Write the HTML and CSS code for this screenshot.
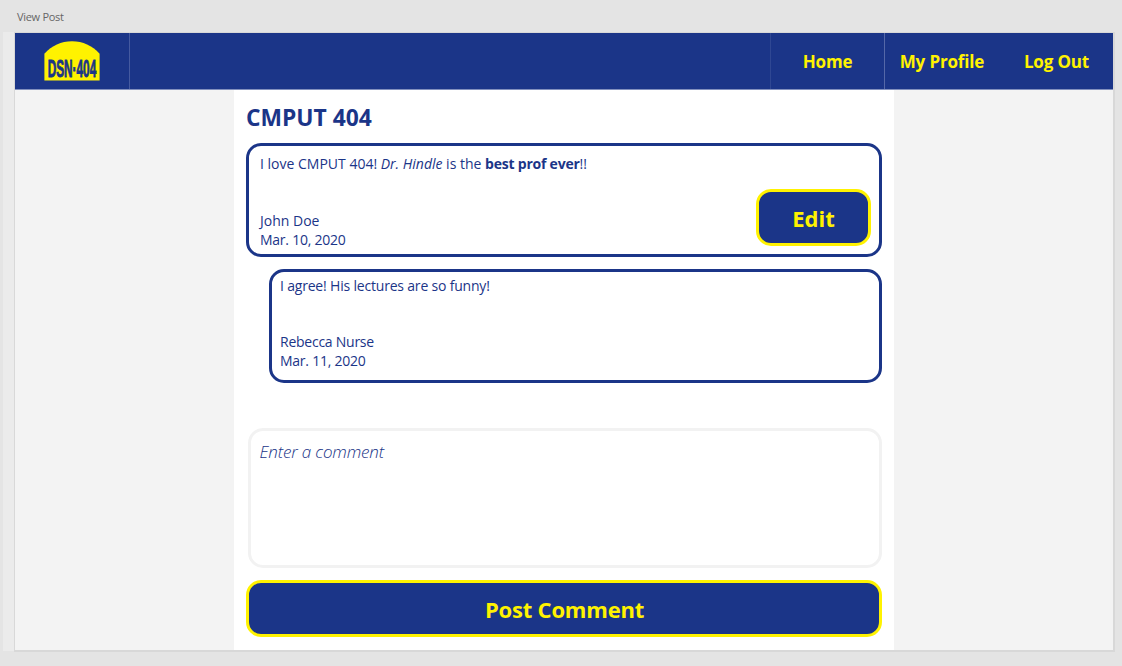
FILE: index.html
```html
<!DOCTYPE html>
<html lang="en">
<head>
<meta charset="utf-8">
<title>View Post</title>
<link rel="stylesheet" href="styles.css">
</head>
<body>
<div class="caption">View Post</div>
<div class="stage">
  <div class="artboard">
    <nav class="navbar">
      <a class="brand">
        <svg width="56" height="40" viewBox="0 0 56 40">
          <path d="M0.4 39.6V12.8C8 4.500 17 0.300 28 0.300S48 4.500 55.600 12.800V39.600Z" fill="#fff200"/>
          <text class="logo-text" x="3.700" y="35.700" textLength="48.500" lengthAdjust="spacingAndGlyphs">DSN·404</text>
        </svg>
      </a>
      <a class="link home"><span>Home</span></a>
      <a class="link profile"><span>My Profile</span></a>
      <a class="link logout"><span>Log Out</span></a>
    </nav>
    <main class="column">
      <h1 class="title"><span>CMPUT 404</span></h1>
      <article class="card post">
        <div class="card-text">
          <p class="message"><span>I love CMPUT 404! </span><em>Dr. Hindle</em><span> is the </span><strong>best prof ever</strong><span>!!</span></p>
          <p>John Doe</p>
          <p class="date">Mar. 10, 2020</p>
        </div>
        <button class="button edit"><span>Edit</span></button>
      </article>
      <article class="card reply">
        <div class="card-text">
          <p class="message">I agree! His lectures are so funny!</p>
          <p class="author">Rebecca Nurse</p>
          <p class="date">Mar. 11, 2020</p>
        </div>
      </article>
      <div class="comment-box"><span>Enter a comment</span></div>
      <button class="button submit"><span>Post Comment</span></button>
    </main>
  </div>
</div>
</body>
</html>
```
FILE: styles.css
```css
* { box-sizing: border-box; }
body {
  margin: 0;
  width: 1122px;
  height: 666px;
  overflow: hidden;
  background: #e4e4e4;
  color: #1b3588;
  font-family: "Open Sans", "Noto Sans", sans-serif;
}
p, h1 { margin: 0; }
.caption {
  height: 32px;
  padding: 9px 0 0 17px;
  font-size: 11px;
  line-height: 16px;
  letter-spacing: -0.3px;
  color: #666;
}
.stage {
  width: 1112px;
  height: 620px;
  margin-left: 3px;
  padding-left: 11px;
  background: linear-gradient(#ebebeb, #ebebeb) 0 0 / 11px 619px no-repeat;
}
.artboard {
  height: 620px;
  border: solid #d8d8d8;
  border-width: 1px 2px 2px 1px;
  background: #f3f3f3;
}
.navbar {
  display: grid;
  grid-template-columns: 115px 1fr 115px 114px 114px;
  height: 57px;
  background: #1b3588;
  border-bottom: 1px solid #8290be;
}
.brand {
  padding: 8px 0 0 29px;
  border-right: 1px solid #455aa0;
}
.brand svg { display: block; overflow: visible; }
.logo-text {
  font: bold 24.5px "Liberation Sans", Arial, sans-serif;
  fill: #1b3588;
  stroke: #1b3588;
  stroke-width: 0.9px;
}
.link {
  display: flex;
  align-items: center;
  justify-content: center;
  color: #fff200;
  font-weight: 700;
  font-size: 17px;
  line-height: 24px;
  padding-top: 2px;
  letter-spacing: -0.15px;
  white-space: nowrap;
}
.home { grid-column: 3; border-left: 1px solid #2f4793; border-right: 1px solid #5568a8; }
.logout { padding-left: 1px; }
.column {
  width: 660px;
  height: 560px;
  margin-left: 219px;
  padding: 12px 12px 0;
  background: #fff;
}
.title {
  height: 41px;
  font-size: 22.8px;
  line-height: 32px;
}
.card {
  display: flex;
  justify-content: space-between;
  height: 114px;
  border: 3px solid #1b3588;
  border-radius: 15px;
  font-size: 14px;
  line-height: 19px;
}
.card p { white-space: pre; }
.post { padding: 8px 8px 0 11px; }
.post .message { margin-bottom: 38px; }
.post strong { letter-spacing: -0.22px; }
.reply { margin: 12px 0 0 23px; padding: 4px 8px 0; }
.reply .message { margin-bottom: 37px; letter-spacing: -0.19px; }
.author, .date { letter-spacing: -0.25px; }
.button {
  display: flex;
  align-items: center;
  justify-content: center;
  padding: 0;
  border: 3px solid #fff200;
  border-radius: 15px;
  background: #1b3588;
  color: #fff200;
  font: 700 22px/32px "Open Sans", "Noto Sans", sans-serif;
  letter-spacing: -0.2px;
}
.edit { width: 115px; height: 57px; margin-top: 35px; letter-spacing: 0; }
.comment-box {
  height: 140px;
  margin: 45px 0 0 2px;
  padding: 9px 9px 0 8.500px;
  border: 3px solid #f2f2f2;
  border-radius: 15px;
  font-size: 17px;
  line-height: 24px;
  font-style: italic;
  font-weight: 300;
  letter-spacing: -0.15px;
}
.submit { width: 636px; height: 57px; margin-top: 12px; padding-left: 1px; }
```
